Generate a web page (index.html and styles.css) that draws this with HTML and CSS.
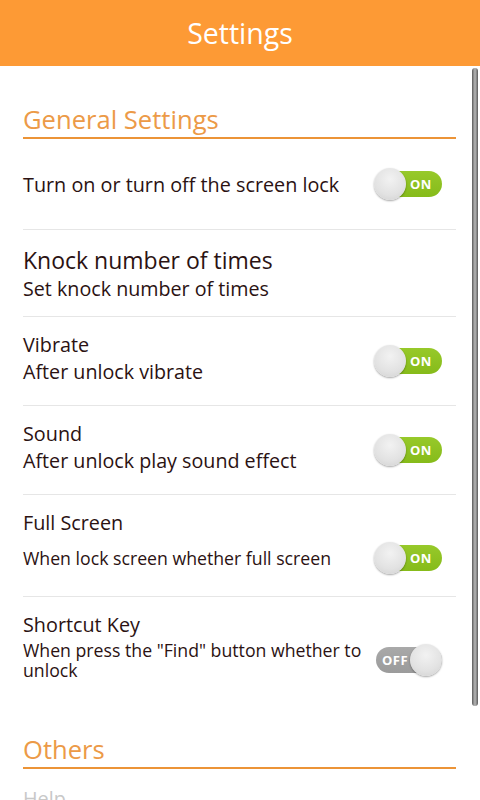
FILE: index.html
```html
<!DOCTYPE html>
<html>
<head>
<meta charset="utf-8">
<link rel="stylesheet" href="styles.css">
</head>
<body>
<div class="app">
  <header class="topbar">Settings</header>
  <main class="content">
    <section class="group">
      <h2 class="group-title">General Settings</h2>
      <div class="row row-single">
        <div class="text"><div class="title">Turn on or turn off the screen lock</div></div>
        <span class="toggle on"><span class="label">ON</span><span class="knob"></span></span>
      </div>
      <div class="row row-knock">
        <div class="text">
          <div class="title big">Knock number of times</div>
          <div class="sub">Set knock number of times</div>
        </div>
      </div>
      <div class="row row-double">
        <div class="text">
          <div class="title">Vibrate</div>
          <div class="sub">After unlock vibrate</div>
        </div>
        <span class="toggle on"><span class="label">ON</span><span class="knob"></span></span>
      </div>
      <div class="row row-double">
        <div class="text">
          <div class="title">Sound</div>
          <div class="sub">After unlock play sound effect</div>
        </div>
        <span class="toggle on"><span class="label">ON</span><span class="knob"></span></span>
      </div>
      <div class="row row-stack">
        <div class="title">Full Screen</div>
        <div class="subrow">
          <div class="sub small">When lock screen whether full screen</div>
          <span class="toggle on"><span class="label">ON</span><span class="knob"></span></span>
        </div>
      </div>
      <div class="row row-stack last">
        <div class="title">Shortcut Key</div>
        <div class="subrow">
          <div class="sub small two">When press the "Find" button whether to unlock</div>
          <span class="toggle off"><span class="label">OFF</span><span class="knob"></span></span>
        </div>
      </div>
    </section>
    <section class="group others">
      <h2 class="group-title">Others</h2>
      <div class="row faded"><div class="title">Help</div></div>
    </section>
  </main>
  <div class="scrollbar"></div>
</div>
</body>
</html>
```

FILE: styles.css
```css
* { box-sizing: border-box; }
html, body { margin: 0; padding: 0; }
body {
  width: 480px;
  height: 800px;
  overflow: hidden;
  background: #ffffff;
  font-family: "Open Sans", "Noto Sans", sans-serif;
  color: #2b1212;
}
.app { position: relative; width: 480px; height: 800px; overflow: hidden; }
.topbar {
  height: 66px;
  background: #fd9a35;
  color: #ffffff;
  font-size: 28.5px;
  line-height: 66px;
  text-align: center;
}
.content { padding: 0 24px 0 23px; }
.group-title {
  margin: 0;
  font-weight: normal;
  font-size: 25.6px;
  line-height: 30px;
  color: #ec9a47;
  padding-top: 39px;
  padding-bottom: 2px;
  border-bottom: 2px solid #ec9437;
}
.row {
  display: flex;
  align-items: center;
  justify-content: space-between;
  border-bottom: 1px solid #e6e6e6;
}
.row-single { height: 91px; }
.row-knock { height: 87px; padding-top: 2px; }
.row-double { height: 89px; padding-bottom: 6px; }
.row-double .toggle { margin-top: 6px; }
.row-stack {
  flex-direction: column;
  align-items: stretch;
  justify-content: flex-start;
  padding-top: 14px;
  height: 102px;
}
.row-stack.last { border-bottom: none; height: 110px; }
.title { font-size: 19.8px; line-height: 27px; }
.title.big { font-size: 23px; line-height: 30px; }
.sub { font-size: 19.7px; line-height: 28px; }
.sub.small { font-size: 17.7px; line-height: 20px; }
.sub.two { max-width: 351px; }
.subrow {
  display: flex;
  align-items: center;
  justify-content: space-between;
  min-height: 36px;
  margin-top: 4px;
}
.row-stack.last .subrow { margin-top: 2px; }
.toggle {
  position: relative;
  flex: none;
  width: 68px;
  height: 34px;
  margin-right: 14px;
}
.toggle::before {
  content: "";
  position: absolute;
  top: 4px;
  bottom: 4px;
  left: 2px;
  right: 0;
  border-radius: 13px;
}
.toggle.on::before { background: linear-gradient(#97c92a, #86bb1a); }
.toggle.off::before { background: linear-gradient(#a9a9a9, #9b9b9b); }
.toggle .label {
  position: absolute;
  top: 0;
  line-height: 34px;
  font-size: 13px;
  font-weight: bold;
  color: #ffffff;
  letter-spacing: 0.5px;
}
.toggle.on .label { left: 36px; }
.toggle.off .label { left: 8px; }
.toggle .knob {
  position: absolute;
  top: 1px;
  width: 32px;
  height: 32px;
  border-radius: 50%;
  background: radial-gradient(circle at 50% 35%, #f2f2f2 0%, #e2e2e2 60%, #cfcfcf 100%);
  box-shadow: 0 1px 2px rgba(0,0,0,0.35);
}
.toggle.on .knob { left: 0; }
.toggle.off .knob { right: 0; }
.others .group-title { padding-top: 28px; }
.faded { border-bottom: none; padding-top: 16px; color: #c8c8c8; }
.scrollbar {
  position: absolute;
  left: 472px;
  top: 68px;
  width: 6px;
  height: 638px;
  border-radius: 3px;
  background: linear-gradient(90deg, #5a5a5a, #a8a8a8 40%, #a8a8a8 60%, #5a5a5a);
}
```
